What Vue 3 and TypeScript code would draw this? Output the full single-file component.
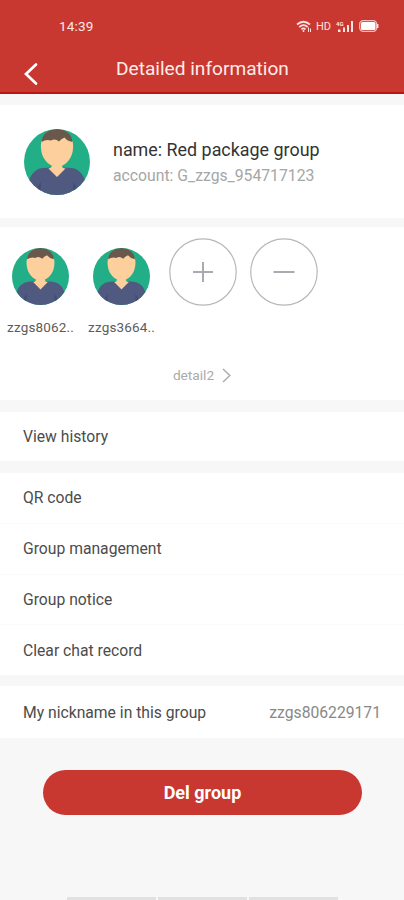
<script setup lang="ts">
import { defineComponent, h } from 'vue'

interface Member {
  id: string
  label: string
}

const members: Member[] = [
  { id: 'a', label: 'zzgs8062..' },
  { id: 'b', label: 'zzgs3664..' },
]

const settings: string[] = ['QR code', 'Group management', 'Group notice', 'Clear chat record']

const Avatar = defineComponent({
  props: { size: { type: Number, required: true } },
  setup(props) {
    return () =>
      h('svg', { width: props.size, height: props.size, viewBox: '0 0 66 66' }, [
        h('defs', [h('clipPath', { id: 'disc' }, [h('circle', { cx: 33, cy: 33, r: 33 })])]),
        h('g', { 'clip-path': 'url(#disc)' }, [
          h('rect', { width: 66, height: 66, fill: '#22af88' }),
          h('path', {
            d: 'M3 66C3 51 8 40 19 39L27 38.5H39L47 39C58 40 63 51 63 66Z',
            fill: '#50597f',
          }),
          h('path', { d: 'M28 33V37Q27 39 24.500 39.500L33 48L41.500 39.500Q38 39 38 37V33Z', fill: '#fccf9d' }),
          h('path', {
            d: 'M17.500 12Q16 18 18 25C20 32 27 38 33 38S46 32 48 25Q50 18 48.500 12L40 5H25Z',
            fill: '#fccf9d',
          }),
          h('path', {
            d: 'M17.500 13C18 5 25 0 33 0S48 5 48.500 13Q43 12 40.500 8.500Q37 10 35 12.500Q31 9 27 11.500Q22 10 17.500 13Z',
            fill: '#69584b',
          }),
          h('path', { d: 'M14 57L17 53V66H13ZM52 57L49 53V66H53Z', fill: '#464e78' }),
        ]),
      ])
  },
})
</script>

<template>
  <div class="screen">
    <header class="header">
      <div class="status">
        <span class="clock">14:39</span>
        <div class="indicators">
          <svg class="wifi" width="16" height="13" viewBox="0 0 16 13" fill="none" stroke="#fbe3df">
            <path d="M1 4.500Q7.500-1 14 4.500M3.300 7Q7.500 3.400 11.700 7M5.500 9.300Q7.500 7.500 9.500 9.300" stroke-width="1.700" />
            <circle cx="7.500" cy="11" r="1" fill="#fbe3df" stroke="none" />
            <path d="M12.500 7.500V12M14.500 8.500V12" stroke-width="1" />
          </svg>
          <span class="hd">HD</span>
          <svg class="signal" width="18" height="13" viewBox="0 0 18 13" fill="#fbe3df">
            <text x="0" y="6" class="net">4G</text>
            <path d="M2 9.500H4.500V12H2ZM7 7.500H9V12H7ZM11 5H13V12H11ZM15 1H17V12H15Z" />
          </svg>
          <svg class="battery" width="20" height="12" viewBox="0 0 20 12">
            <rect x=".7" y=".7" width="17" height="10.600" rx="3.500" fill="none" stroke="#f3bfba" stroke-width="1.300" />
            <rect x="2" y="2" width="14.500" height="8" rx="1.500" fill="#fff" />
            <path d="M18.700 4V8" stroke="#fbe3df" stroke-width="1.500" />
          </svg>
        </div>
      </div>
      <div class="titlebar">
        <svg class="back" width="16" height="24" viewBox="0 0 16 24">
          <path d="M14 2.500L4 12L14 21.500" fill="none" stroke="#fff" stroke-width="2.700" stroke-linecap="round" />
        </svg>
        <h1 class="title">Detailed information</h1>
      </div>
    </header>

    <section class="card profile">
      <Avatar :size="66" />
      <div class="identity">
        <div class="name">name: Red package group</div>
        <div class="account">account: G_zzgs_954717123</div>
      </div>
    </section>

    <section class="card members">
      <div class="grid">
        <div v-for="m in members" :key="m.id" class="member">
          <Avatar :size="57" />
          <span class="member-name">{{ m.label }}</span>
        </div>
        <button class="round" aria-label="Add member">
          <svg width="68" height="68" viewBox="0 0 68 68" fill="none">
            <circle cx="34" cy="34" r="33.200" stroke="#b8b8bb" stroke-width="1.200" />
            <path d="M24 34H44M34 24V44" stroke="#aaaab0" stroke-width="2" />
          </svg>
        </button>
        <button class="round" aria-label="Remove member">
          <svg width="68" height="68" viewBox="0 0 68 68" fill="none">
            <circle cx="34" cy="34" r="33.200" stroke="#b8b8bb" stroke-width="1.200" />
            <path d="M23.500 34H44.500" stroke="#aaaab0" stroke-width="2" />
          </svg>
        </button>
      </div>
      <div class="more">
        <span>detail2</span>
        <svg width="9" height="15" viewBox="0 0 9 15">
          <path d="M1 1L7.800 7.500L1 14" fill="none" stroke="#aaa" stroke-width="1.400" />
        </svg>
      </div>
    </section>

    <section class="card history"><div class="row">View history</div></section>

    <section class="card settings">
      <div v-for="s in settings" :key="s" class="row">{{ s }}</div>
    </section>

    <section class="card nickname">
      <div class="row">
        <span class="nick-label">My nickname in this group</span>
        <span class="nick">zzgs806229171</span>
      </div>
    </section>

    <button class="delete">Del group</button>

    <div class="navbar"><i></i><i></i><i></i></div>
  </div>
</template>

<style>
body {
  background: #f7f7f7;
}
</style>

<style scoped>
.screen {
  display: flex;
  flex-direction: column;
  width: 404px;
  height: 900px;
  overflow: hidden;
  box-sizing: border-box;
  background: #f7f7f7;
  font-family: Roboto, "Liberation Sans", sans-serif;
  color: #4c4c4c;
}
.header {
  flex: none;
  height: 94px;
  box-sizing: border-box;
  background: #c83831;
  border-bottom: 2px solid #bd1514;
  color: #fff;
}
.status {
  display: flex;
  justify-content: space-between;
  align-items: center;
  height: 20px;
  padding: 16px 25px 0 59px;
}
.clock {
  font-size: 13.5px;
  letter-spacing: 0.2px;
  color: #fbe9e6;
}
.indicators {
  display: flex;
  align-items: center;
}
.hd {
  margin-left: 4px;
  font-size: 11px;
  color: #fbe3df;
}
.signal {
  margin-left: 5px;
}
.net {
  font-size: 6px;
  font-weight: 700;
}
.battery {
  margin-left: 5px;
}
.titlebar {
  display: flex;
  align-items: center;
  height: 50px;
  padding-left: 22px;
}
.back {
  margin-top: 25px;
}
.title {
  margin: 15px 0 0 78px;
  font-size: 19.1px;
  line-height: 24px;
  font-weight: 400;
  color: #fdebe8;
  white-space: nowrap;
}
.card {
  flex: none;
  box-sizing: border-box;
  background: #fff;
}
.profile {
  display: flex;
  align-items: center;
  gap: 23px;
  height: 113px;
  margin-top: 11px;
  padding-left: 24px;
}
.identity {
  padding-top: 2px;
  white-space: nowrap;
}
.name {
  font-size: 17.9px;
  line-height: 26px;
  color: #333;
}
.account {
  font-size: 15.75px;
  line-height: 25px;
  color: #a6a6a6;
}
.members {
  height: 173px;
  margin-top: 9px;
  padding-top: 11px;
}
.grid {
  display: grid;
  grid-template-columns: repeat(5, 81px);
  height: 99px;
}
.member {
  display: flex;
  flex-direction: column;
  align-items: center;
  padding-top: 10px;
}
.member-name {
  margin-top: 14px;
  font-size: 13.5px;
  letter-spacing: 0.15px;
  line-height: 16px;
  color: #5c5c5c;
}
.round {
  justify-self: center;
  align-self: start;
  display: flex;
  padding: 0;
  border: 0;
  background: none;
}
.more {
  display: flex;
  align-items: center;
  justify-content: center;
  gap: 8px;
  height: 20px;
  margin-top: 28px;
  font-size: 13.7px;
  color: #aaa;
}
.row {
  display: flex;
  align-items: center;
  justify-content: space-between;
  flex: 1;
  padding: 0 23px;
  font-size: 15.7px;
}
.history {
  display: flex;
  height: 49px;
  margin-top: 12px;
}
.settings {
  display: flex;
  flex-direction: column;
  height: 202px;
  margin-top: 12px;
}
.settings .row + .row {
  border-top: 1px solid #fafafa;
}
.nickname {
  display: flex;
  height: 52px;
  margin-top: 11px;
}
.nick {
  color: #888;
}
.delete {
  flex: none;
  width: 319px;
  height: 45px;
  margin: 32px 0 0 43px;
  padding: 0;
  border: 0;
  border-radius: 23px;
  background: #c83831;
  color: #fff;
  font: 700 18px Roboto, sans-serif;
}
.navbar {
  display: flex;
  gap: 2px;
  height: 3px;
  margin: auto 66px 0 67px;
}
.navbar i {
  flex: 1;
  background: #e1e1e1;
}
</style>
